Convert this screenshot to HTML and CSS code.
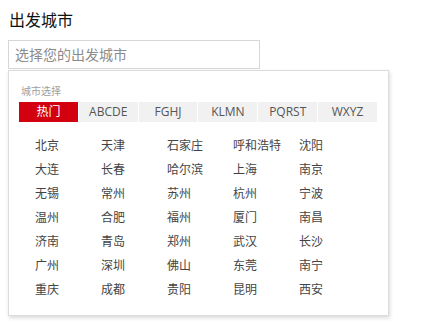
FILE: index.html
```html
<!DOCTYPE html>
<html lang="zh-CN">
<head>
    <meta charset="UTF-8">
    <meta name="viewport" content="width=device-width, initial-scale=1.0">
    <title>出发城市</title>
    <link rel="stylesheet" href="styles.css">
</head>
<body>
    <div class="city-picker">
        <h3 class="picker-title">出发城市</h3>
        <input type="text" class="city-input" placeholder="选择您的出发城市">
        <div class="city-panel">
            <p class="panel-label">城市选择</p>
            <ul class="city-tabs">
                <li class="tab active">热门</li>
                <li class="tab">ABCDE</li>
                <li class="tab">FGHJ</li>
                <li class="tab">KLMN</li>
                <li class="tab">PQRST</li>
                <li class="tab">WXYZ</li>
            </ul>
            <ul class="city-list">
                <li>北京</li><li>天津</li><li>石家庄</li><li>呼和浩特</li><li>沈阳</li>
                <li>大连</li><li>长春</li><li>哈尔滨</li><li>上海</li><li>南京</li>
                <li>无锡</li><li>常州</li><li>苏州</li><li>杭州</li><li>宁波</li>
                <li>温州</li><li>合肥</li><li>福州</li><li>厦门</li><li>南昌</li>
                <li>济南</li><li>青岛</li><li>郑州</li><li>武汉</li><li>长沙</li>
                <li>广州</li><li>深圳</li><li>佛山</li><li>东莞</li><li>南宁</li>
                <li>重庆</li><li>成都</li><li>贵阳</li><li>昆明</li><li>西安</li>
            </ul>
        </div>
    </div>
</body>
</html>
```

FILE: styles.css
```css
* {
    margin: 0;
    padding: 0;
    box-sizing: border-box;
    font-family: 'Open Sans', 'Noto Sans CJK SC', sans-serif;
}

body {
    background-color: #fff;
    padding: 9px 8px;
}

.picker-title {
    font-size: 16px;
    font-weight: normal;
    line-height: 22px;
    color: #111;
    margin-bottom: 9px;
    padding-left: 1px;
}

.city-input {
    display: block;
    width: 252px;
    height: 29px;
    border: 1px solid #d6d6d6;
    padding: 0 6px;
    font-size: 14px;
    color: #333;
    outline: none;
}

.city-input::placeholder {
    color: #8c8c8c;
}

.city-panel {
    width: 381px;
    height: 246px;
    margin-top: 1px;
    border: 1px solid #dcdcdc;
    box-shadow: 1px 2px 4px rgba(0, 0, 0, 0.15);
    padding: 10px 10px 0 10px;
}

.panel-label {
    font-size: 10px;
    line-height: 20px;
    color: #a0a0a0;
    padding-left: 2px;
    margin-bottom: 1px;
}

.city-tabs {
    list-style: none;
    display: flex;
}

.tab {
    width: 60px;
    height: 20px;
    line-height: 20px;
    text-align: center;
    font-size: 12px;
    color: #555;
    background-color: #f1f1f1;
    border-right: 1px solid #fff;
}

.tab.active {
    background-color: #d3000f;
    color: #fff;
}

.city-list {
    list-style: none;
    display: grid;
    grid-template-columns: repeat(5, 66px);
    grid-auto-rows: 24px;
    margin-top: 12px;
    padding-left: 16px;
}

.city-list li {
    font-size: 12px;
    line-height: 24px;
    color: #444;
    white-space: nowrap;
}
```
